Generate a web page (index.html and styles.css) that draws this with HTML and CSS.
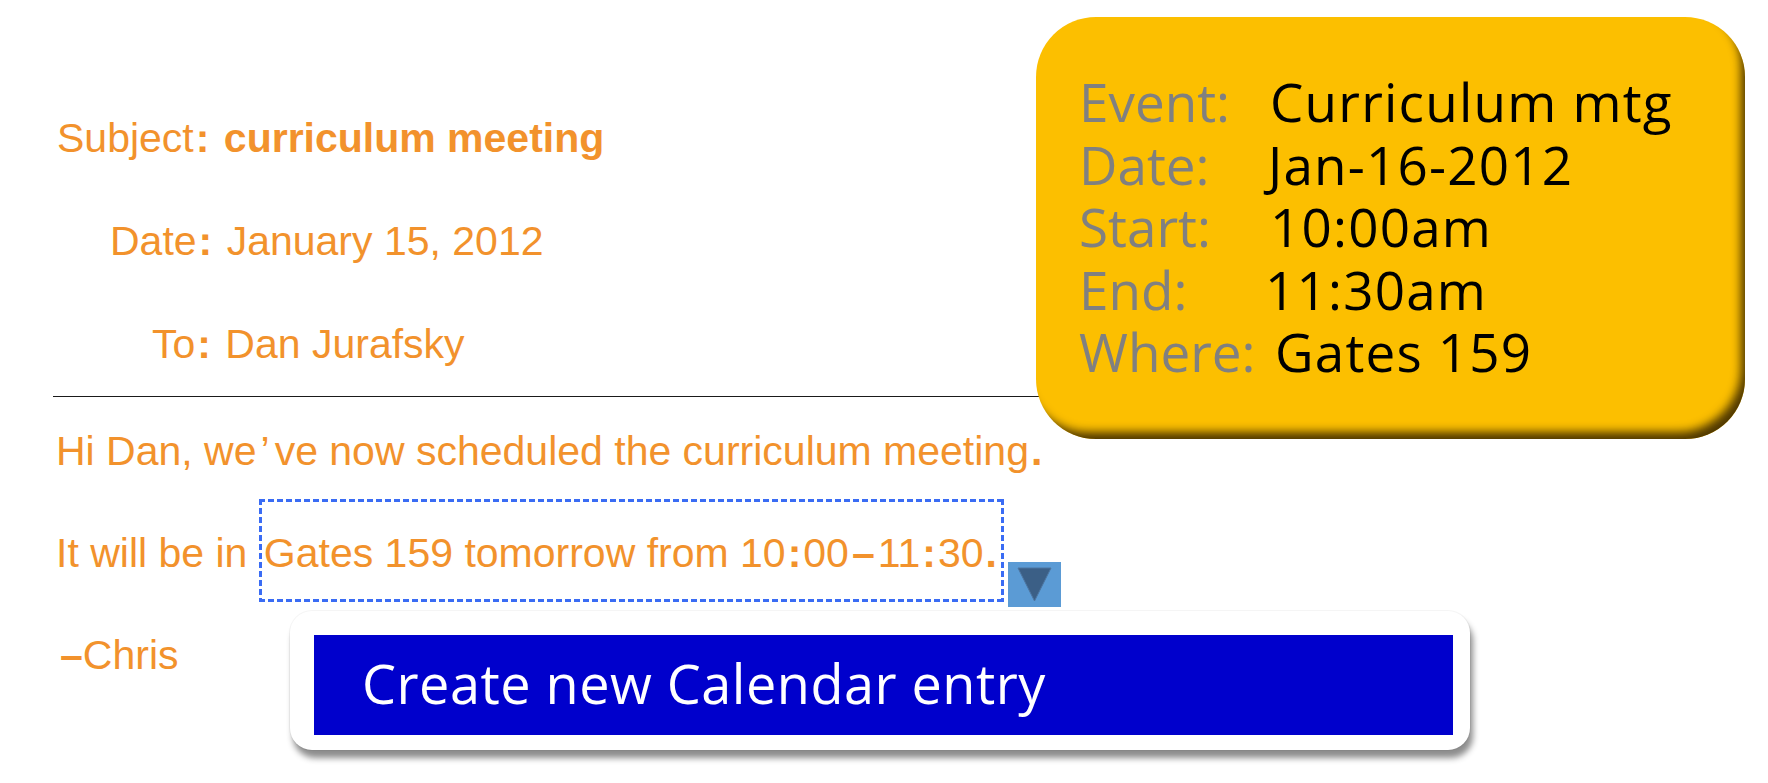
FILE: index.html
```html
<!DOCTYPE html>
<html lang="en">
<head>
<meta charset="utf-8">
<title>Calendar entry extraction</title>
<link rel="stylesheet" href="styles.css">
</head>
<body>
<div class="slide">
  <div class="header">
    <div class="hline subj">Subject<b class="colon">:</b> <b>curriculum meeting</b></div>
    <div class="hline date">Date<b class="colon">:</b> January 15, 2012</div>
    <div class="hline to">To<b class="colon">:</b> Dan Jurafsky</div>
  </div>
  <div class="rule"></div>
  <div class="body">
    <p class="bline">Hi Dan, we<span class="apos">’</span>ve now scheduled the curriculum meeting<b class="dot">.</b></p>
    <p class="bline">It will be in <span class="sel">Gates 159 tomorrow from 10<b class="tcolon">:</b>00<b class="dash">–</b>11<b class="tcolon">:</b>30<b class="dot">.</b><span class="drop"><svg class="drop-icon" viewBox="0 0 53 45" width="53" height="45"><polygon points="10,6 43,6 26.5,39" fill="#3b5f86" stroke="#4d75a0" stroke-width="1"/></svg></span></span></p>
    <p class="bline sig"><b>–</b>Chris</p>
  </div>

  <div class="card">
    <div class="card-grid">
      <span class="lbl">Event:</span><span class="val">Curriculum mtg</span>
      <span class="lbl">Date:</span><span class="val val-date">Jan-16-2012</span>
      <span class="lbl">Start:</span><span class="val">10:00am</span>
      <span class="lbl">End:</span><span class="val val-end">11:30am</span>
      <span class="lbl">Where:</span><span class="val val-where">Gates 159</span>
    </div>
  </div>

  <div class="menu">
    <div class="menu-item">Create new Calendar entry</div>
  </div>
</div>
</body>
</html>
```

FILE: styles.css
```css
html, body {
  margin: 0;
  padding: 0;
  background: #ffffff;
}

body {
  width: 1768px;
  height: 783px;
  overflow: hidden;
}

.slide {
  position: relative;
  width: 1768px;
  height: 783px;
  font-family: "Liberation Sans", Arial, sans-serif;
  color: #f2922c;
}

.header {
  padding-top: 87px;
}

.hline {
  font-size: 41px;
  line-height: 103px;
  height: 103px;
  white-space: nowrap;
}

.hline b {
  font-weight: bold;
}

.colon {
  margin: 0 3px 0 2px;
}

.subj { padding-left: 57px; }
.date { padding-left: 110px; }
.to   { padding-left: 152px; }

.rule {
  margin-left: 53px;
  width: 1050px;
  height: 0;
  border-top: 1px solid #1a1a1a;
}

.body {
  padding-top: 3px;
}

.bline {
  margin: 0;
  padding-left: 56px;
  font-size: 41px;
  line-height: 102px;
  height: 102px;
  white-space: nowrap;
}

.apos {
  margin: 0 5px 0 4px;
}

.dot {
  margin-left: 2px;
}

.tcolon {
  margin: 0 2px;
}

.dash {
  margin: 0 3px;
}

.sig {
  padding-left: 60px;
}

.sel {
  position: relative;
  padding: 31px 7px 26px 5px;
  background:
    repeating-linear-gradient(90deg, #3a6cf4 0 6px, transparent 6px 9px) left top / 100% 3px no-repeat,
    repeating-linear-gradient(90deg, #3a6cf4 0 6px, transparent 6px 9px) left bottom / 100% 3px no-repeat,
    repeating-linear-gradient(180deg, #3a6cf4 0 6px, transparent 6px 9px) left top / 3px 100% no-repeat,
    repeating-linear-gradient(180deg, #3a6cf4 0 6px, transparent 6px 9px) right top / 3px 100% no-repeat;
}

.drop {
  position: absolute;
  left: calc(100% + 4px);
  top: 63px;
  width: 53px;
  height: 45px;
  background: #5b9bd5;
}

.drop-icon {
  display: block;
}

.card {
  position: absolute;
  left: 1036px;
  top: 17px;
  width: 709px;
  height: 422px;
  box-sizing: border-box;
  padding: 54px 0 0 43px;
  background: #fcbf00;
  border-radius: 60px;
  box-shadow: inset -8px -11px 10px -4px rgba(70, 48, 0, 0.95);
  font-family: "Open Sans", "DejaVu Sans", sans-serif;
  font-size: 53px;
  line-height: 62.5px;
}

.card-grid {
  display: grid;
  grid-template-columns: 191px auto;
}

.lbl {
  color: #808080;
}

.val {
  color: #000000;
  letter-spacing: 1.2px;
}

.val-date { margin-left: -2px; }
.val-end { margin-left: -5px; }
.val-where { margin-left: 5px; }

.menu {
  position: absolute;
  left: 290px;
  top: 611px;
  width: 1180px;
  height: 139px;
  box-sizing: border-box;
  padding: 24px 17px 15px 24px;
  background: #ffffff;
  border-radius: 22px;
  box-shadow: 0 0 0 1px rgba(0, 0, 0, 0.04), 3px 8px 6px rgba(0, 0, 0, 0.45);
}

.menu-item {
  height: 100px;
  box-sizing: border-box;
  padding-left: 48px;
  background: #0000cc;
  color: #ffffff;
  font-family: "Open Sans", "DejaVu Sans", sans-serif;
  font-size: 54px;
  letter-spacing: 0.5px;
  line-height: 96px;
  white-space: nowrap;
}
```
